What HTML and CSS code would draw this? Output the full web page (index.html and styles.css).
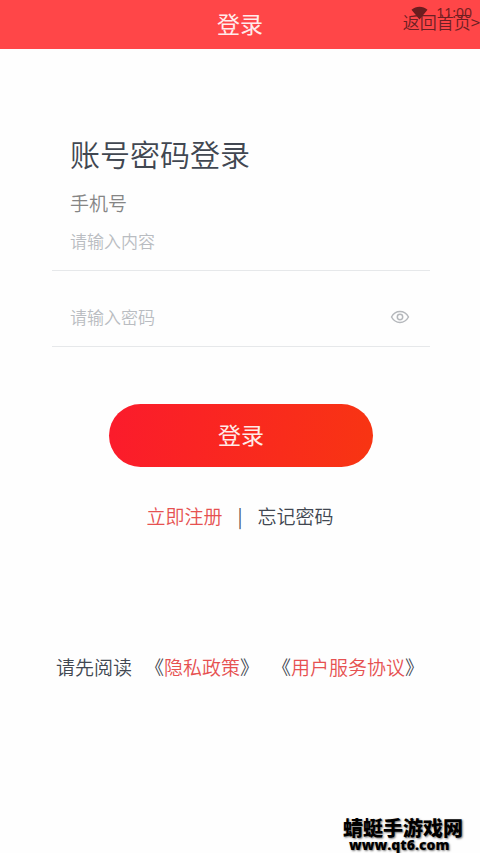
FILE: index.html
```html
<!DOCTYPE html>
<html lang="zh-CN">
<head>
<meta charset="utf-8">
<meta name="viewport" content="width=device-width, initial-scale=1">
<title>登录</title>
<link rel="stylesheet" href="styles.css">
</head>
<body>
<header class="topbar">
  <h1 class="topbar-title">登录</h1>
  <a class="home-link" href="#">返回首页&gt;</a>
  <div class="status">
    <svg class="wifi" viewBox="0 0 18 14" aria-hidden="true"><path d="M0.5 3.6C5.500-.8 12.500-.8 17.500 3.600L9 13.800Z"/></svg>
    <span>11:00</span>
  </div>
</header>
<main class="page">
  <form class="login">
    <h2 class="title">账号密码登录</h2>
    <label class="label" for="phone">手机号</label>
    <div class="field">
      <input class="input" id="phone" type="tel" placeholder="请输入内容">
    </div>
    <div class="field field-password">
      <input class="input" type="password" aria-label="密码" placeholder="请输入密码">
      <button class="reveal" type="button" aria-label="显示密码">
        <svg class="eye" viewBox="0 0 20 14" aria-hidden="true"><path d="M1.500 7C5.500-.2 14.500-.2 18.500 7C14.500 14.200 5.500 14.200 1.500 7Z"/><circle cx="10" cy="7" r="2.700"/></svg>
      </button>
    </div>
    <button class="submit" type="button">登录</button>
  </form>
  <nav class="links">
    <a class="accent" href="#">立即注册</a>
    <span class="divider">|</span>
    <a href="#">忘记密码</a>
  </nav>
  <p class="terms">
    <span>请先阅读</span>
    <span>《<a class="accent" href="#">隐私政策</a>》</span>
    <span>《<a class="accent" href="#">用户服务协议</a>》</span>
  </p>
</main>
<footer class="watermark">
  <span class="site-name">蜻蜓手游戏网</span>
  <span class="site-url">www.qt6.com</span>
</footer>
</body>
</html>
```
FILE: styles.css
```css
* {
  box-sizing: border-box;
}

body {
  margin: 0;
  min-height: 100vh;
  display: flex;
  flex-direction: column;
  background: #fefefe;
  color: #414751;
  font-family: "Noto Sans CJK SC", sans-serif;
  font-size: 19px;
  font-weight: 350;
  line-height: 28px;
}

a {
  color: inherit;
  text-decoration: none;
}

button {
  border: 0;
  font-family: inherit;
  font-weight: inherit;
  cursor: pointer;
}

.topbar {
  position: relative;
  padding: 7px 0 9px;
  background: #ff4648;
  text-align: center;
}

.topbar-title {
  margin: 0;
  color: #ffebeb;
  font-size: 23px;
  font-weight: 400;
  line-height: 33px;
}

.home-link {
  position: absolute;
  top: 8px;
  right: 0;
  color: #6b2024;
  font-size: 17px;
}

.status {
  position: absolute;
  top: 4px;
  right: 8px;
  display: flex;
  align-items: center;
  gap: 8px;
  color: #751f21;
  font-family: "Noto Sans", sans-serif;
  font-size: 14px;
  font-weight: 400;
  line-height: 18px;
}

.wifi {
  width: 17px;
  height: 14px;
  fill: #6b1d1f;
}

.page {
  flex: 1;
}

.login {
  display: flex;
  flex-direction: column;
  margin: 0 50px 0 52px;
  padding-top: 82px;
}

.title {
  margin: 0 18px;
  font-size: 30px;
  font-weight: inherit;
  line-height: 44px;
}

.label {
  margin: 14px 18px 0;
  color: #858585;
}

.field {
  display: flex;
  align-items: center;
  height: 54px;
  padding: 0 18px;
  border-bottom: 1px solid #e6e8ea;
}

.label + .field {
  align-items: flex-start;
  padding-top: 10px;
}

.field-password {
  height: 76px;
  padding-top: 17px;
}

.input {
  flex: 1;
  min-width: 0;
  padding: 0;
  border: 0;
  outline: 0;
  background: none;
  color: inherit;
  font-family: inherit;
  font-size: 17px;
  font-weight: inherit;
  line-height: 28px;
}

.input::placeholder {
  color: #b9bcc1;
}

.reveal {
  display: flex;
  padding: 0 2px;
  background: none;
}

.eye {
  width: 20px;
  height: 14px;
  fill: none;
  stroke: #b5b8bc;
  stroke-width: 1.5;
}

.submit {
  align-self: center;
  width: 70%;
  margin-top: 57px;
  padding: 13px 0 15px;
  border-radius: 32px;
  background: linear-gradient(100deg, #fb1b2c, #f83512);
  color: #ffebe8;
  font-size: 23px;
  font-weight: 400;
  line-height: 35px;
}

.links {
  display: flex;
  justify-content: center;
  gap: 15px;
  margin-top: 35px;
}

.accent {
  color: #e65151;
}

.terms {
  display: flex;
  justify-content: center;
  gap: 13px;
  margin: 123px 0 0;
}

.watermark {
  display: flex;
  flex-direction: column;
  align-items: flex-start;
  align-self: flex-end;
  margin-right: 17px;
  color: #000;
  text-shadow: 1px 1px 2px #777;
}

.site-name {
  font-size: 20px;
  font-weight: 900;
  line-height: 19px;
}

.site-url {
  padding-left: 6px;
  font-family: "Open Sans", sans-serif;
  font-size: 14px;
  font-weight: 800;
  line-height: 16px;
}
```
